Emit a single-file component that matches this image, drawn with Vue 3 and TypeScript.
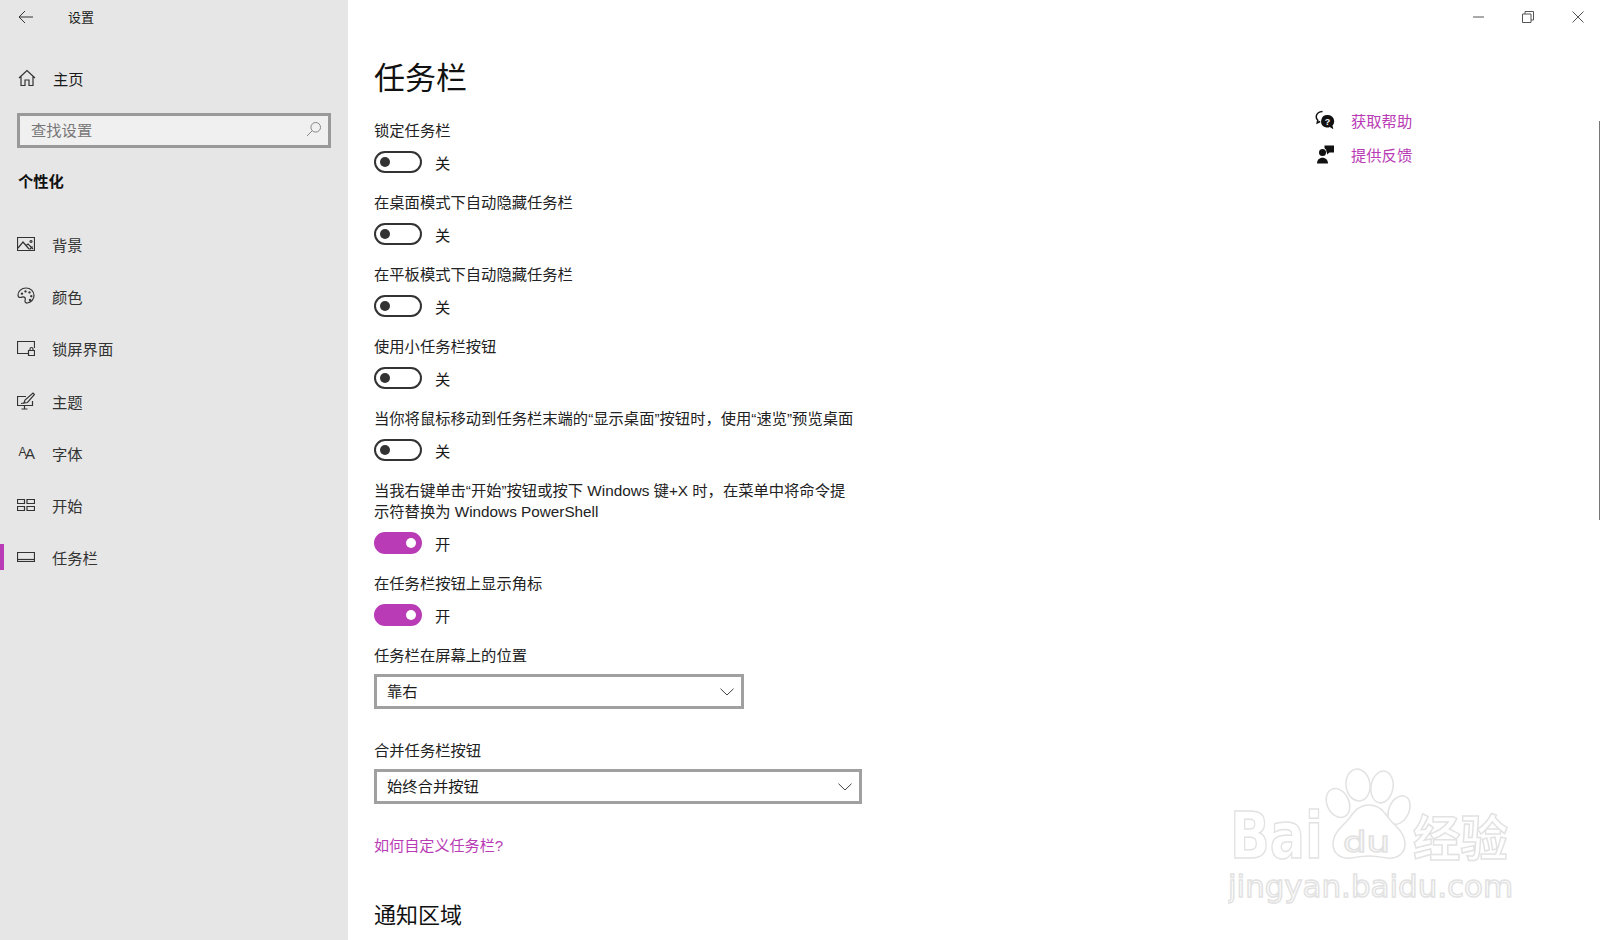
<script setup lang="ts">
interface NavItem {
  label: string
  icon: string[]
  active?: boolean
}

interface Switch {
  label: string
  on: boolean
}

const navItems: NavItem[] = [
  { label: '背景', icon: ['M.5 2.500h17v13H.5z', 'M1 13l5-6 6 7', 'M9 10.500l2-1.500 5 5', 'M12.500 14.500l3-3', 'M14 5.500a1 1 0 1 1-.01 0'] },
  { label: '颜色', icon: ['M9 1C4.500 1 1 4.300 1 8c0 1.500 1 2.500 2.300 2.500 1.200 0 2-.7 3-.7 1.300 0 2 1 2 2.200 0 .8-.3 1.300-.3 2 0 1.300 1 2.200 2.300 2 3.700-.5 6.700-3.700 6.700-7.500C17 4.300 13.500 1 9 1z', 'M5 6a.6.6 0 1 1-.01 0', 'M8.500 3.800a.6.6 0 1 1-.01 0', 'M12.500 4.800a.6.6 0 1 1-.01 0', 'M14.300 8.500a.6.6 0 1 1-.01 0', 'M13 12.300a.6.6 0 1 1-.01 0'] },
  { label: '锁屏界面', icon: ['M11 14.500H.5V2.500h17V9', 'M11.500 11.500h6v5h-6z', 'M13 11.500V10a1.500 1.500 0 0 1 3 0v1.500'] },
  { label: '主题', icon: ['M9 4.500H.5v9h15V9', 'M7.500 13.500v3.500M4.500 17h6', 'M7 11l1-3 8-7 1.500 1.500-7 8z', 'M4 11.500l3-.5'] },
  { label: '字体', icon: [] },
  { label: '开始', icon: ['M.5 3.500h7v4h-7z', 'M10 3.500h7.500v4H10z', 'M.5 10.500h7v4h-7z', 'M10 10.500h7.500v4H10z'] },
  { label: '任务栏', icon: ['M.5 4.500h17v9H.5z', 'M.5 11.500h17'], active: true }
]

const switches: Switch[] = [
  { label: '锁定任务栏', on: false },
  { label: '在桌面模式下自动隐藏任务栏', on: false },
  { label: '在平板模式下自动隐藏任务栏', on: false },
  { label: '使用小任务栏按钮', on: false },
  { label: '当你将鼠标移动到任务栏末端的“显示桌面”按钮时\uFF0C使用“速览”预览桌面', on: false },
  { label: '当我右键单击“开始”按钮或按下 Windows 键+X 时\uFF0C在菜单中将命令提示符替换为 Windows PowerShell', on: true },
  { label: '在任务栏按钮上显示角标', on: true }
]
</script>

<template>
  <div class="window">
    <aside class="sidebar">
      <div class="titlebar">
        <svg class="back" width="16" height="14" viewBox="0 0 16 14">
          <path d="M7 1L1 7l6 6M1 7h14" />
        </svg>
        <span>设置</span>
      </div>
      <div class="home">
        <svg class="nav-icon" viewBox="0 0 18 18">
          <path d="M1 9l8-7.500L17 9M3 7.500V16.500h4v-5.500h4v5.500h4V7.500" />
        </svg>
        <span>主页</span>
      </div>
      <div class="search">
        <span>查找设置</span>
        <svg width="16" height="16" viewBox="0 0 16 16">
          <circle cx="9.700" cy="6.300" r="4.800" />
          <path d="M6.300 9.700L1 15" />
        </svg>
      </div>
      <div class="section-name">个性化</div>
      <nav class="nav">
        <div v-for="item in navItems" :key="item.label" class="nav-item" :class="{ active: item.active }">
          <span v-if="!item.icon.length" class="font-icon"><small>A</small>A</span>
          <svg v-else class="nav-icon" viewBox="0 0 18 18">
            <path v-for="d in item.icon" :key="d" :d="d" />
          </svg>
          <span>{{ item.label }}</span>
        </div>
      </nav>
    </aside>

    <main class="content">
      <h1>任务栏</h1>
      <div v-for="sw in switches" :key="sw.label" class="setting">
        <div class="setting-label">{{ sw.label }}</div>
        <div class="switch-row">
          <span class="switch" :class="{ on: sw.on }"><i></i></span>
          <span>{{ sw.on ? '开' : '关' }}</span>
        </div>
      </div>

      <div class="setting-label combo-label">任务栏在屏幕上的位置</div>
      <div class="combo combo-short">
        <span>靠右</span>
        <svg width="14" height="8" viewBox="0 0 14 8"><path d="M.5.700L7 7l6.500-6.300" /></svg>
      </div>

      <div class="setting-label combo-label merge-label">合并任务栏按钮</div>
      <div class="combo combo-long">
        <span>始终合并按钮</span>
        <svg width="14" height="8" viewBox="0 0 14 8"><path d="M.5.700L7 7l6.500-6.300" /></svg>
      </div>

      <a class="link how-to">如何自定义任务栏?</a>
      <h2>通知区域</h2>
    </main>

    <div class="help">
      <div class="help-row">
        <svg width="20" height="20" viewBox="0 0 20 20">
          <path class="bubble-back" d="M7.500 1.500C4 1.500 1.200 3.800 1.200 6.700c0 1.400.6 2.600 1.600 3.500L2.200 13l3-1.500" />
          <g transform="translate(0 1)">
            <path class="bubble-front" d="M12.500 4a6.300 6.300 0 0 0-2 12.300c1.500.5 3 .4 4.300-.2l3.500 2.200-.8-3.800A6.300 6.300 0 0 0 12.500 4z" />
            <text x="12.600" y="13.800" class="bubble-mark">?</text>
          </g>
        </svg>
        <a class="link">获取帮助</a>
      </div>
      <div class="help-row">
        <svg width="20" height="20" viewBox="0 0 20 20">
          <circle class="solid" cx="7.500" cy="8.500" r="3.500" />
          <path class="solid" d="M2 19.500c0-3.600 2.200-5.800 5.500-5.800s5.500 2.200 5.500 5.800z" />
          <path class="solid" d="M9.500 1.500H19v7h-4.500l-2.500 2v-2h-.5a4.500 4.500 0 0 0-2-4.500z" />
        </svg>
        <a class="link">提供反馈</a>
      </div>
    </div>

    <div class="caption">
      <svg width="12" height="2" viewBox="0 0 12 2"><path d="M1 1h11" /></svg>
      <svg width="12" height="12" viewBox="0 0 12 12">
        <path d="M.5 3h8.500v8.500H.5z" />
        <path d="M3 3V.5h8.500V9H9" />
      </svg>
      <svg width="12" height="12" viewBox="0 0 12 12"><path d="M.5.500l11 11M11.500.500l-11 11" /></svg>
    </div>

    <div class="scrollbar"></div>

    <svg class="watermark" width="300" height="145" viewBox="0 0 300 145">
      <g transform="translate(2 0)">
        <text x="0" y="90" font-size="64" font-weight="700" textLength="93" lengthAdjust="spacingAndGlyphs" class="mark-latin">Bai</text>
        <ellipse cx="108" cy="35" rx="11" ry="15" transform="rotate(-25 108 35)" />
        <ellipse cx="128" cy="17" rx="12" ry="16" transform="rotate(-8 128 17)" />
        <ellipse cx="152" cy="19" rx="11" ry="16" transform="rotate(10 152 19)" />
        <ellipse cx="169" cy="42" rx="10" ry="15" transform="rotate(25 169 42)" />
        <path d="M139 37c-12 0-16 9-22 16-7 7-14 13-14 23 0 10 8 15 18 14 6-1 12-2 18-2s12 1 18 2c10 1 18-4 18-14 0-10-7-16-14-23-6-7-10-16-22-16z" />
        <text x="113" y="84" font-size="29" textLength="47" lengthAdjust="spacingAndGlyphs" class="mark-latin">du</text>
        <text x="183" y="88" font-size="49" font-weight="700" textLength="95" lengthAdjust="spacingAndGlyphs" class="mark-cjk">经验</text>
      </g>
      <text x="0" y="129" font-size="31" textLength="285" lengthAdjust="spacingAndGlyphs" class="mark-latin">jingyan.baidu.com</text>
    </svg>
  </div>
</template>

<style scoped>
.window {
  position: relative;
  display: flex;
  width: 1600px;
  height: 940px;
  overflow: hidden;
  background: #fff;
  color: #1a1a1a;
  font-family: "Liberation Sans", "Noto Sans CJK SC", sans-serif;
  font-size: 15.300px;
}

svg {
  fill: none;
  stroke: currentColor;
  flex: none;
}

.sidebar {
  width: 348px;
  flex: none;
  background: #e6e6e6;
  display: flex;
  flex-direction: column;
}

.titlebar {
  display: flex;
  align-items: center;
  height: 34px;
  padding-left: 18px;
  font-size: 13px;
}

.titlebar span {
  padding-bottom: 2px;
}

.back {
  margin-right: 34px;
  color: #333;
}

.home {
  display: flex;
  align-items: center;
  height: 24px;
  margin-top: 32px;
  padding-left: 18px;
  gap: 17px;
}

.nav-icon {
  width: 18px;
  height: 18px;
  color: #333;
  stroke-width: 1.200;
}

.search {
  display: flex;
  align-items: center;
  justify-content: space-between;
  box-sizing: border-box;
  height: 35px;
  margin: 23px 17px 0;
  padding: 0 6px 3px 11px;
  border: 3px solid #999;
  background: #f0f0f0;
  color: #777;
}

.search svg {
  color: #888;
}

.section-name {
  margin: 23px 0 0 18px;
  line-height: 22px;
  font-weight: 700;
  color: #111;
}

.nav {
  margin-top: 25px;
  display: flex;
  flex-direction: column;
}

.nav-item {
  position: relative;
  display: flex;
  align-items: center;
  height: 52.200px;
  padding-left: 17px;
  gap: 17px;
  color: #333;
}

.nav-item.active::before {
  content: "";
  position: absolute;
  left: 0;
  top: 13px;
  width: 4px;
  height: 26px;
  background: #b93bb5;
}

.font-icon {
  width: 18px;
  text-align: center;
  font-size: 15px;
  line-height: 18px;
  letter-spacing: -1.500px;
  color: #333;
}

.font-icon small {
  font-size: 12px;
  vertical-align: 3px;
}

.content {
  flex: none;
  width: 900px;
  padding: 60px 0 0 26px;
}

h1 {
  margin: 0 0 22px;
  font-size: 31px;
  line-height: 38px;
  font-weight: 400;
  color: #111;
}

.setting {
  margin-bottom: 19px;
}

.setting-label {
  width: 482px;
  line-height: 21px;
  color: #222;
}

.combo-label {
  margin-bottom: 8px;
}

.switch-row {
  display: flex;
  align-items: center;
  gap: 13px;
  height: 22px;
  margin-top: 10px;
}

.switch {
  box-sizing: border-box;
  display: flex;
  align-items: center;
  width: 48px;
  height: 22px;
  padding: 0 4px;
  border: 2px solid #333;
  border-radius: 11px;
}

.switch i {
  width: 10px;
  height: 10px;
  border-radius: 50%;
  background: #333;
}

.switch.on {
  justify-content: flex-end;
  border-color: #b93bb5;
  background: #b93bb5;
}

.switch.on i {
  background: #fff;
}

.combo {
  box-sizing: border-box;
  display: flex;
  align-items: center;
  justify-content: space-between;
  height: 35px;
  padding: 0 7px 0 10px;
  border: 3px solid #a0a0a0;
}

.combo span {
  padding-bottom: 3px;
}

.combo svg {
  color: #444;
}

.combo-short {
  width: 370px;
}

.combo-long {
  width: 488px;
}

.merge-label {
  margin-top: 31px;
}

.link {
  color: #b93bb5;
}

.how-to {
  display: block;
  margin-top: 31px;
  line-height: 22px;
  font-size: 15.100px;
}

h2 {
  margin: 44px 0 0;
  font-size: 22px;
  line-height: 30px;
  font-weight: 400;
  color: #111;
}

.help {
  position: absolute;
  left: 1315px;
  top: 109px;
  display: flex;
  flex-direction: column;
  gap: 12px;
}

.help-row {
  display: flex;
  align-items: center;
  gap: 16px;
  height: 22px;
}

.bubble-back {
  stroke: #111;
  stroke-width: 1.500;
}

.bubble-front,
.solid {
  fill: #111;
  stroke: none;
}

.bubble-mark {
  fill: #fff;
  stroke: none;
  font-size: 9px;
  font-weight: 700;
  text-anchor: middle;
}

.caption {
  position: absolute;
  top: 11px;
  right: 16px;
  display: flex;
  align-items: center;
  gap: 38px;
  height: 12px;
  color: #555;
}

.scrollbar {
  position: absolute;
  right: 0;
  top: 121px;
  width: 1px;
  height: 399px;
  background: #777;
}

.watermark {
  position: absolute;
  left: 1228px;
  top: 768px;
  fill: #fff;
  stroke: #e2e2e2;
  stroke-width: 1.500;
}

.mark-latin {
  font-family: "DejaVu Sans", sans-serif;
}

.mark-cjk {
  font-family: "Noto Sans CJK SC", sans-serif;
}
</style>
